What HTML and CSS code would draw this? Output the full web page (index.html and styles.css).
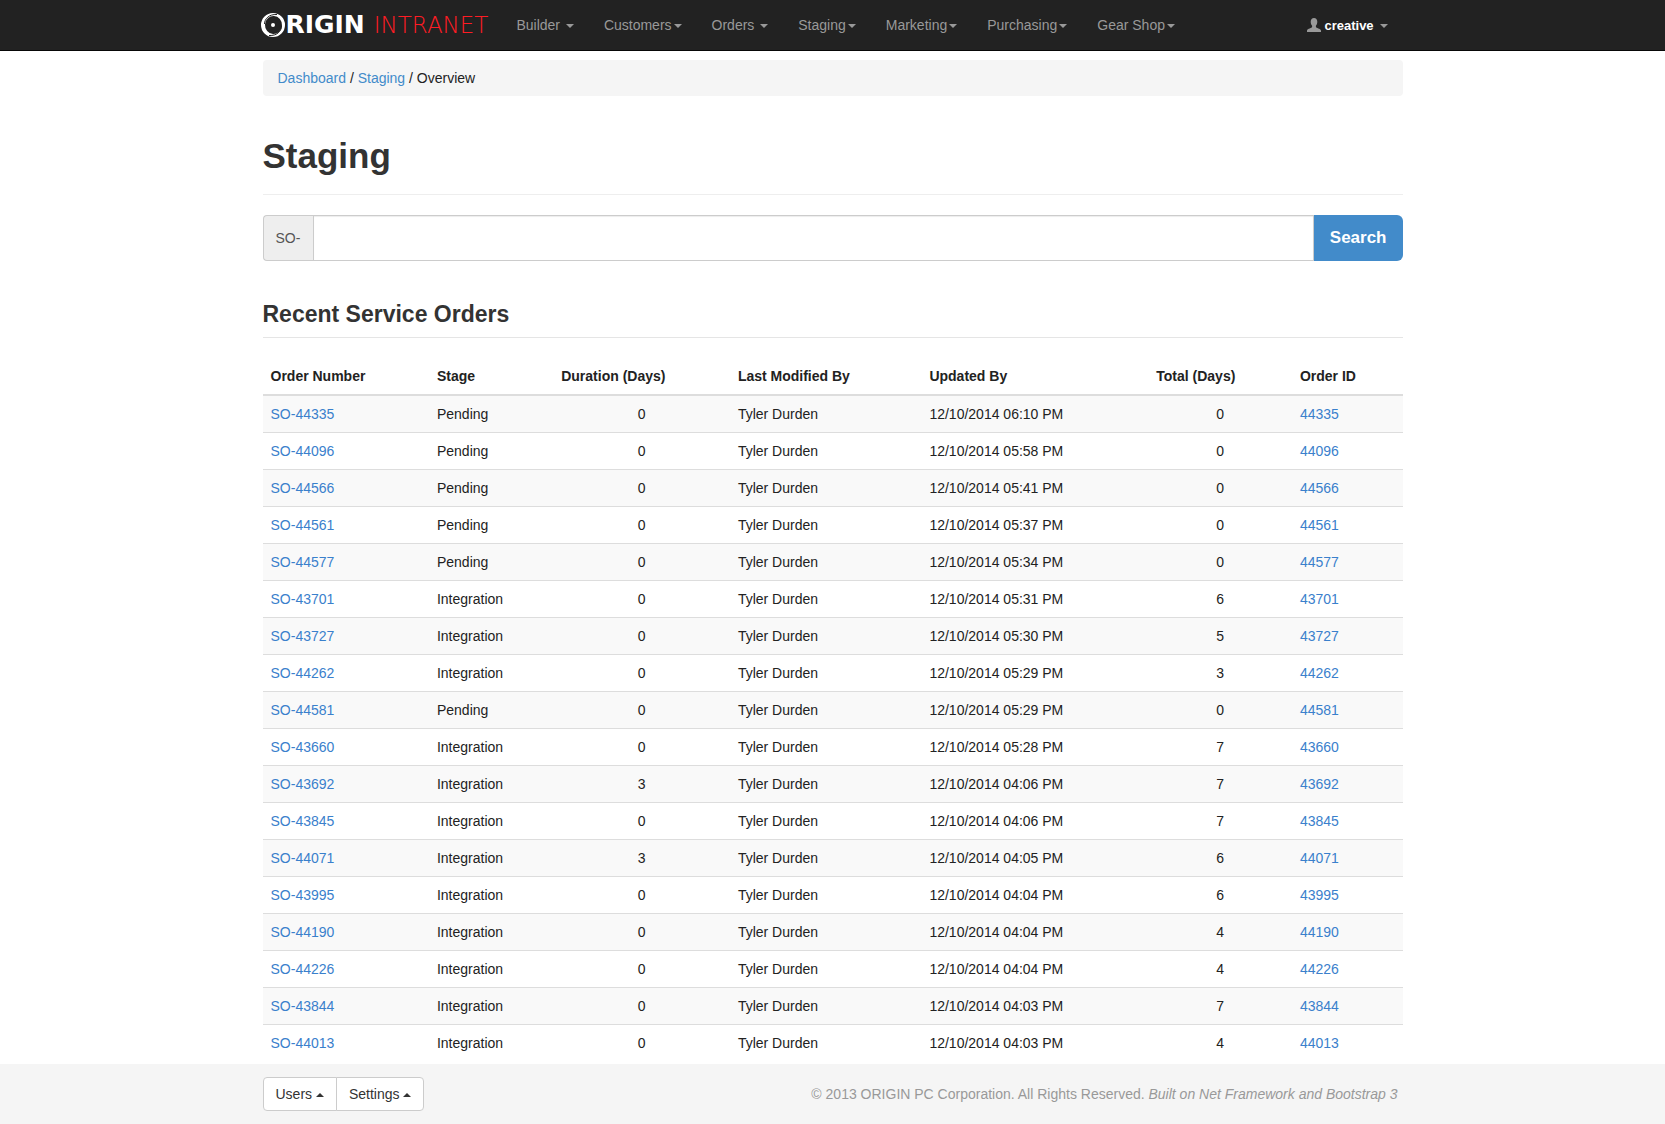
FILE: index.html
```
<!DOCTYPE html>
<html lang="en">
<head>
  <meta charset="UTF-8">
  <meta name="viewport" content="width=device-width, initial-scale=1.0">
  <title>Staging - Origin Intranet</title>

  <link rel="stylesheet" href="styles.css">

</head>
<body>
  <div class="navbar">
    <div class="container navbar-inner">
      <a class="brand" href="#">
        <svg class="brand-mark" viewBox="0 0 26 26" aria-hidden="true">
          <path fill="#ffffff" fill-rule="evenodd" d="M13 1A12 12 0 0 1 13 25A12 12 0 0 1 13 1ZM14 4A8.500 9 0 0 0 13 22A8.500 9 0 0 0 14 4Z"/>
          <path fill="none" stroke="#222222" stroke-width="1" d="M17 2.500C9 2 4.500 7 4.500 12M9 23.500C17 24 21.500 19 21.500 14"/>
          <circle cx="13" cy="13" r="2" fill="#ffffff"/>
        </svg>
        <span class="brand-name">RIGIN</span>
        <span class="brand-sub">INTRANET</span>
      </a>
      <ul class="nav">
        <li><a href="#">Builder <span class="caret"></span></a></li>
        <li><a href="#">Customers<span class="caret"></span></a></li>
        <li><a href="#">Orders <span class="caret"></span></a></li>
        <li><a href="#">Staging<span class="caret"></span></a></li>
        <li><a href="#">Marketing<span class="caret"></span></a></li>
        <li><a href="#">Purchasing<span class="caret"></span></a></li>
        <li><a href="#">Gear Shop<span class="caret"></span></a></li>
      </ul>
      <ul class="nav nav-right">
        <li>
          <a href="#">
            <svg class="user-icon" viewBox="0 0 14 14" aria-hidden="true">
              <path fill="#999999" d="M7 0C9 0 10.300 1.500 10.300 3.800C10.300 5.800 9.600 7 8.900 7.800V9C9 10 13.500 10.500 14 12.500V14H0V12.500C.500 10.500 5 10 5.100 9V7.800C4.400 7 3.700 5.800 3.700 3.800C3.700 1.500 5 0 7 0Z"/>
            </svg>
            <strong>creative</strong> <span class="caret"></span>
          </a>
        </li>
      </ul>
    </div>
  </div>

  <div class="container content">
    <div class="breadcrumb">
      <a href="#">Dashboard</a> / <a href="#">Staging</a> / <span>Overview</span>
    </div>

    <div class="page-header">
      <h1>Staging</h1>
    </div>

    <form class="search">
      <label class="addon" for="order">SO-</label>
      <input type="text" id="order">
      <button type="button">Search</button>
    </form>

    <h3>Recent Service Orders</h3>

    <table class="orders">
      <thead>
        <tr>
          <th class="col-number">Order Number</th>
          <th class="col-stage">Stage</th>
          <th class="col-duration">Duration (Days)</th>
          <th class="col-modified">Last Modified By</th>
          <th class="col-updated">Updated By</th>
          <th class="col-total">Total (Days)</th>
          <th class="col-id">Order ID</th>
        </tr>
      </thead>
      <tbody>
        <tr><td><a href="#">SO-44335</a></td><td>Pending</td><td class="days">0</td><td>Tyler Durden</td><td>12/10/2014 06:10 PM</td><td class="days">0</td><td><a href="#">44335</a></td></tr>
        <tr><td><a href="#">SO-44096</a></td><td>Pending</td><td class="days">0</td><td>Tyler Durden</td><td>12/10/2014 05:58 PM</td><td class="days">0</td><td><a href="#">44096</a></td></tr>
        <tr><td><a href="#">SO-44566</a></td><td>Pending</td><td class="days">0</td><td>Tyler Durden</td><td>12/10/2014 05:41 PM</td><td class="days">0</td><td><a href="#">44566</a></td></tr>
        <tr><td><a href="#">SO-44561</a></td><td>Pending</td><td class="days">0</td><td>Tyler Durden</td><td>12/10/2014 05:37 PM</td><td class="days">0</td><td><a href="#">44561</a></td></tr>
        <tr><td><a href="#">SO-44577</a></td><td>Pending</td><td class="days">0</td><td>Tyler Durden</td><td>12/10/2014 05:34 PM</td><td class="days">0</td><td><a href="#">44577</a></td></tr>
        <tr><td><a href="#">SO-43701</a></td><td>Integration</td><td class="days">0</td><td>Tyler Durden</td><td>12/10/2014 05:31 PM</td><td class="days">6</td><td><a href="#">43701</a></td></tr>
        <tr><td><a href="#">SO-43727</a></td><td>Integration</td><td class="days">0</td><td>Tyler Durden</td><td>12/10/2014 05:30 PM</td><td class="days">5</td><td><a href="#">43727</a></td></tr>
        <tr><td><a href="#">SO-44262</a></td><td>Integration</td><td class="days">0</td><td>Tyler Durden</td><td>12/10/2014 05:29 PM</td><td class="days">3</td><td><a href="#">44262</a></td></tr>
        <tr><td><a href="#">SO-44581</a></td><td>Pending</td><td class="days">0</td><td>Tyler Durden</td><td>12/10/2014 05:29 PM</td><td class="days">0</td><td><a href="#">44581</a></td></tr>
        <tr><td><a href="#">SO-43660</a></td><td>Integration</td><td class="days">0</td><td>Tyler Durden</td><td>12/10/2014 05:28 PM</td><td class="days">7</td><td><a href="#">43660</a></td></tr>
        <tr><td><a href="#">SO-43692</a></td><td>Integration</td><td class="days">3</td><td>Tyler Durden</td><td>12/10/2014 04:06 PM</td><td class="days">7</td><td><a href="#">43692</a></td></tr>
        <tr><td><a href="#">SO-43845</a></td><td>Integration</td><td class="days">0</td><td>Tyler Durden</td><td>12/10/2014 04:06 PM</td><td class="days">7</td><td><a href="#">43845</a></td></tr>
        <tr><td><a href="#">SO-44071</a></td><td>Integration</td><td class="days">3</td><td>Tyler Durden</td><td>12/10/2014 04:05 PM</td><td class="days">6</td><td><a href="#">44071</a></td></tr>
        <tr><td><a href="#">SO-43995</a></td><td>Integration</td><td class="days">0</td><td>Tyler Durden</td><td>12/10/2014 04:04 PM</td><td class="days">6</td><td><a href="#">43995</a></td></tr>
        <tr><td><a href="#">SO-44190</a></td><td>Integration</td><td class="days">0</td><td>Tyler Durden</td><td>12/10/2014 04:04 PM</td><td class="days">4</td><td><a href="#">44190</a></td></tr>
        <tr><td><a href="#">SO-44226</a></td><td>Integration</td><td class="days">0</td><td>Tyler Durden</td><td>12/10/2014 04:04 PM</td><td class="days">4</td><td><a href="#">44226</a></td></tr>
        <tr><td><a href="#">SO-43844</a></td><td>Integration</td><td class="days">0</td><td>Tyler Durden</td><td>12/10/2014 04:03 PM</td><td class="days">7</td><td><a href="#">43844</a></td></tr>
        <tr><td><a href="#">SO-44013</a></td><td>Integration</td><td class="days">0</td><td>Tyler Durden</td><td>12/10/2014 04:03 PM</td><td class="days">4</td><td><a href="#">44013</a></td></tr>
      </tbody>
    </table>
  </div>

  <div class="footer">
    <div class="container footer-inner">
      <div class="btn-group">
        <button type="button">Users <span class="caret caret-up"></span></button>
        <button type="button">Settings <span class="caret caret-up"></span></button>
      </div>
      <p>&copy; 2013 ORIGIN PC Corporation. All Rights Reserved. <em>Built on Net Framework and Bootstrap 3</em></p>
    </div>
  </div>
</body>
</html>
```
FILE: styles.css
```
* {
  box-sizing: border-box;
}

body {
  margin: 0;
  min-height: 100vh;
  display: flex;
  flex-direction: column;
  background-color: #ffffff;
  color: #222222;
  font-family: "Liberation Sans", Arial, sans-serif;
  font-size: 14px;
  line-height: 20px;
}

a {
  color: #428bca;
  text-decoration: none;
}

.container {
  width: 100%;
  max-width: 1170px;
  margin: 0 auto;
  padding: 0 15px;
}

/* top bar */
.navbar {
  background-color: #222222;
  border-bottom: 1px solid #080808;
}

.navbar-inner {
  display: flex;
  align-items: center;
  height: 50px;
}

.brand {
  display: flex;
  align-items: center;
  margin-left: -3px;
  margin-right: 13px;
  line-height: 24px;
}

.brand-mark {
  width: 26px;
  height: 26px;
}

.brand-name {
  font-family: "DejaVu Sans", sans-serif;
  font-size: 25px;
  font-weight: bold;
  color: #ffffff;
}

.brand-sub {
  margin-left: 9px;
  font-family: "DejaVu Sans", sans-serif;
  font-size: 23px;
  font-weight: 200;
  color: #ff1c24;
}

.nav {
  display: flex;
  margin: 0;
  padding: 0;
  list-style: none;
}

.nav a {
  display: block;
  padding: 15px;
  color: #999999;
  white-space: nowrap;
}

.nav strong {
  font-size: 13px;
  color: #ffffff;
}

.nav-right {
  margin-left: auto;
}

.user-icon {
  width: 14px;
  height: 14px;
  vertical-align: -2px;
}

.caret {
  display: inline-block;
  margin-left: 2px;
  vertical-align: middle;
  border-top: 4px solid;
  border-left: 4px solid transparent;
  border-right: 4px solid transparent;
}

.caret-up {
  margin-left: 0;
  border-top: 0;
  border-bottom: 4px solid;
}

/* content */
.content {
  padding-top: 9px;
}

.breadcrumb {
  padding: 8px 15px;
  background-color: #f5f5f5;
  border-radius: 4px;
}

.page-header {
  margin: 40px 0 20px;
  padding-bottom: 18px;
  border-bottom: 1px solid #eeeeee;
}

h1 {
  margin: 0;
  font-size: 35px;
  line-height: 40px;
  color: #333333;
}

h3 {
  margin: 40px 0 20px;
  padding-bottom: 10px;
  border-bottom: 1px solid #e5e5e5;
  font-size: 23px;
  line-height: 26px;
  color: #333333;
}

.search {
  display: flex;
  height: 46px;
}

.addon {
  padding: 12px 13px 12px 12px;
  background-color: #eeeeee;
  border: 1px solid #cccccc;
  border-right: 0;
  border-radius: 4px 0 0 4px;
  color: #555555;
}

.search input {
  flex: 1;
  min-width: 0;
  padding: 10px 16px;
  border: 1px solid #cccccc;
  border-radius: 0;
  box-shadow: inset 0 1px 1px rgba(0, 0, 0, 0.075);
  font-family: inherit;
  font-size: 18px;
}

.search button {
  padding: 0 16px;
  background-color: #428bca;
  border: 0;
  border-radius: 0 6px 6px 0;
  color: #ffffff;
  font-family: inherit;
  font-size: 17px;
  font-weight: bold;
}

/* orders table */
.orders {
  width: 100%;
  table-layout: fixed;
  border-collapse: collapse;
}

.orders th,
.orders td {
  padding: 8px;
  text-align: left;
}

.orders th {
  border-bottom: 2px solid #dddddd;
}

.orders td {
  border-top: 1px solid #dddddd;
}

.orders tbody tr:nth-child(odd) {
  background-color: #f9f9f9;
}

.orders td.days {
  text-align: center;
}

.orders a {
  color: #3a80cc;
}

.col-number { width: 14.6%; }
.col-stage { width: 10.9%; }
.col-duration { width: 15.5%; }
.col-modified { width: 16.8%; }
.col-updated { width: 19.9%; }
.col-total { width: 12.6%; }
.col-id { width: 9.7%; }

/* footer */
.footer {
  margin-top: auto;
  background-color: #f5f5f5;
}

.footer-inner {
  display: flex;
  justify-content: space-between;
  align-items: center;
  min-height: 60px;
}

.footer p {
  margin: 0;
  padding-right: 5px;
  color: #999999;
}

.btn-group {
  display: flex;
}

.btn-group button {
  padding: 6px 12px;
  background-color: #ffffff;
  border: 1px solid #cccccc;
  border-radius: 4px 0 0 4px;
  color: #333333;
  font-family: inherit;
  font-size: 14px;
  line-height: 20px;
}

.btn-group button + button {
  margin-left: -1px;
  border-radius: 0 4px 4px 0;
}
```
